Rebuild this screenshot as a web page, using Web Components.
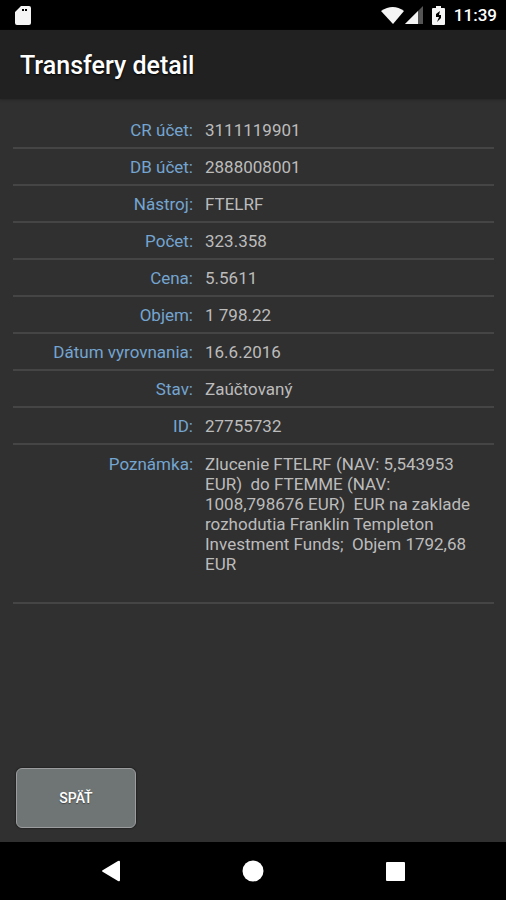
<!DOCTYPE html>
<html lang="sk">
<head>
<meta charset="utf-8">
<meta name="viewport" content="width=device-width, initial-scale=1">
<title>Transfery detail</title>
<style>
  body {
    margin: 0;
    background: #303030;
    color: #bcbcbc;
    font-family: Roboto, "Noto Sans", sans-serif;
    font-size: 17px;
    line-height: 20px;
  }
</style>
</head>
<body>
<app-screen>
  <status-bar slot="top" time="11:39"></status-bar>
  <title-bar slot="top">Transfery detail</title-bar>
  <detail-list>
    <detail-row label="CR účet:">3111119901</detail-row>
    <detail-row label="DB účet:">2888008001</detail-row>
    <detail-row label="Nástroj:">FTELRF</detail-row>
    <detail-row label="Počet:">323.358</detail-row>
    <detail-row label="Cena:">5.5611</detail-row>
    <detail-row label="Objem:">1 798.22</detail-row>
    <detail-row label="Dátum vyrovnania:">16.6.2016</detail-row>
    <detail-row label="Stav:">Zaúčtovaný</detail-row>
    <detail-row label="ID:">27755732</detail-row>
    <detail-row label="Poznámka:" note>Zlucenie FTELRF (NAV: 5,543953 EUR)  do FTEMME (NAV: 1008,798676 EUR)  EUR na zaklade rozhodutia Franklin Templeton Investment Funds;  Objem 1792,68 EUR</detail-row>
  </detail-list>
  <action-button slot="bottom">SPÄŤ</action-button>
  <nav-bar slot="nav"></nav-bar>
</app-screen>

<script>
class AppScreen extends HTMLElement {
  constructor() {
    super();

    this.attachShadow({ mode: "open" });
    this.shadowRoot.innerHTML = `
            <style>
                :host {
                    display: flex;
                    flex-direction: column;
                    min-height: 100vh;
                }
                main {
                    flex: 1;
                    padding: 13px 12px 0 13px;
                }
                footer {
                    padding: 14px 16px;
                }
            </style>
            <slot name="top"></slot>
            <main><slot></slot></main>
            <footer><slot name="bottom"></slot></footer>
            <slot name="nav"></slot>
        `;
  }
}

class StatusBar extends HTMLElement {
  constructor() {
    super();

    this.attachShadow({ mode: "open" });
    this.shadowRoot.innerHTML = `
            <style>
                :host {
                    display: flex;
                    align-items: center;
                    height: 30px;
                    padding: 0 9px 0 14px;
                    background: #000;
                    color: #fff;
                    font-weight: 500;
                }
                svg {
                    display: block;
                    fill: #f5f5f5;
                }
                .signal, .battery {
                    margin-right: 9px;
                }
                .card {
                    margin-right: auto;
                }
            </style>
            <svg class="card" width="18" height="20" viewBox="0 0 18 20" aria-hidden="true">
                <path fill-rule="evenodd" d="M7 1h8a2 2 0 0 1 2 2v15a2 2 0 0 1-2 2H3a2 2 0 0 1-2-2V7zM8 4v2h2V4zm3 0v2h2V4z"/>
            </svg>
            <svg width="24" height="20" viewBox="0 0 24 20" aria-hidden="true">
                <path d="M0 6Q12-2 23 6L12 19z"/>
            </svg>
            <svg class="signal" width="18" height="20" viewBox="0 0 18 20" aria-hidden="true">
                <path d="M0 19 18 1V19z" fill="#555"/>
                <path d="M0 19 13 6V19z"/>
            </svg>
            <svg class="battery" width="13" height="20" viewBox="0 0 13 20" aria-hidden="true">
                <path fill-rule="evenodd" d="M4 1h5v2h3a1 1 0 0 1 1 1v15a1 1 0 0 1-1 1H1a1 1 0 0 1-1-1V4a1 1 0 0 1 1-1h3zM8 6 4 9v3h3l-2 5 4-4v-3H7z"/>
            </svg>
            <span></span>
        `;
  }

  connectedCallback() {
    this.shadowRoot.querySelector("span").textContent = this.getAttribute("time");
  }
}

class TitleBar extends HTMLElement {
  constructor() {
    super();

    this.attachShadow({ mode: "open" });
    this.shadowRoot.innerHTML = `
            <style>
                :host {
                    display: block;
                    padding: 21px 20px 19px;
                    background: #212121;
                    box-shadow: 0 1px 2px #262626;
                }
                h1 {
                    margin: 0;
                    color: #fff;
                    font-size: 25px;
                    font-weight: 500;
                    line-height: 29px;
                    text-shadow: 0 1px 2px #000;
                }
            </style>
            <h1><slot></slot></h1>
        `;
  }
}

class DetailList extends HTMLElement {
  constructor() {
    super();

    this.attachShadow({ mode: "open" });
    this.shadowRoot.innerHTML = `
            <style>
                :host {
                    display: block;
                }
            </style>
            <slot></slot>
        `;
  }
}

class DetailRow extends HTMLElement {
  constructor() {
    super();

    this.attachShadow({ mode: "open" });
    this.shadowRoot.innerHTML = `
            <style>
                :host {
                    display: block;
                    border-bottom: 2px solid #454545;
                }
                dl {
                    display: grid;
                    grid-template-columns: 180px 1fr;
                    gap: 12px;
                    margin: 0;
                    padding: 8px 8px 7px 0;
                }
                :host([note]) dl {
                    padding: 9px 8px 28px 0;
                }
                dt {
                    color: #74a5d0;
                    text-align: right;
                }
                dd {
                    margin: 0;
                    white-space: pre-wrap;
                }
            </style>
            <dl><dt></dt><dd><slot></slot></dd></dl>
        `;
  }

  connectedCallback() {
    this.shadowRoot.querySelector("dt").textContent = this.getAttribute("label");
  }
}

class ActionButton extends HTMLElement {
  constructor() {
    super();

    this.attachShadow({ mode: "open" });
    this.shadowRoot.innerHTML = `
            <style>
                :host {
                    display: block;
                }
                button {
                    display: block;
                    min-width: 120px;
                    height: 60px;
                    border: 1px solid #9a9c9e;
                    border-radius: 6px;
                    background: #6f7475;
                    color: #fff;
                    font: 500 14px/20px Roboto, "Noto Sans", sans-serif;
                    text-shadow: 0 1px 1px #444;
                    box-shadow: 0 0 1px 1px #252525;
                }
            </style>
            <button type="button"><slot></slot></button>
        `;
  }
}

class NavBar extends HTMLElement {
  constructor() {
    super();

    this.attachShadow({ mode: "open" });
    this.shadowRoot.innerHTML = `
            <style>
                :host {
                    display: block;
                    background: #000;
                }
                nav {
                    display: grid;
                    grid-template-columns: repeat(3, 1fr);
                    padding: 0 40px;
                }
                button {
                    display: grid;
                    place-items: center;
                    height: 58px;
                    padding: 0;
                    border: 0;
                    background: none;
                }
                svg {
                    fill: #fff;
                }
            </style>
            <nav>
                <button type="button" aria-label="Späť">
                    <svg width="22" height="22" viewBox="0 0 22 22"><path d="M3 10 18 1Q20 0 20 2V20Q20 22 18 21L3 12Q1 11 3 10z"/></svg>
                </button>
                <button type="button" aria-label="Domov">
                    <svg width="22" height="22" viewBox="0 0 22 22"><circle cx="11" cy="11" r="10.5"/></svg>
                </button>
                <button type="button" aria-label="Prehľad">
                    <svg width="22" height="22" viewBox="0 0 22 22"><rect x="2" y="2" width="19" height="19" rx="1"/></svg>
                </button>
            </nav>
        `;
  }
}

customElements.define("app-screen", AppScreen);
customElements.define("status-bar", StatusBar);
customElements.define("title-bar", TitleBar);
customElements.define("detail-list", DetailList);
customElements.define("detail-row", DetailRow);
customElements.define("action-button", ActionButton);
customElements.define("nav-bar", NavBar);
</script>
</body>
</html>
